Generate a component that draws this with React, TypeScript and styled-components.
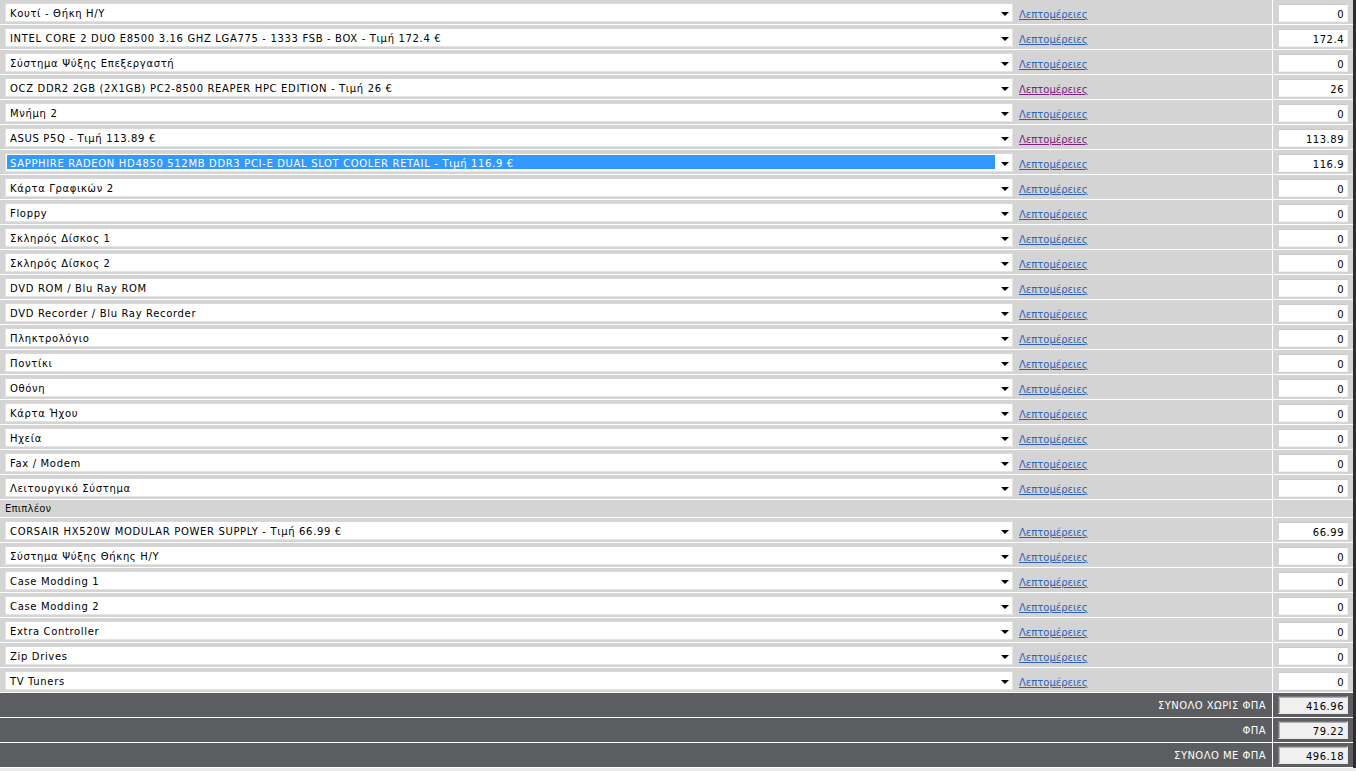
import styled, { createGlobalStyle } from "styled-components"

const GlobalStyle = createGlobalStyle`
  html, body {
    margin: 0;
    padding: 0;
    background: #ebebeb;
  }
  body {
    font-family: "DejaVu Sans", Verdana, sans-serif;
    font-size: 10px;
    color: #000;
  }
`

type Part = {
  label: string
  price: string
  visited?: boolean
  focused?: boolean
}

const mainParts: Part[] = [
  { label: "Κουτί - Θήκη Η/Υ", price: "0" },
  { label: "INTEL CORE 2 DUO E8500 3.16 GHZ LGA775 - 1333 FSB - BOX - Τιμή 172.4 €", price: "172.4" },
  { label: "Σύστημα Ψύξης Επεξεργαστή", price: "0" },
  { label: "OCZ DDR2 2GB (2X1GB) PC2-8500 REAPER HPC EDITION - Τιμή 26 €", price: "26", visited: true },
  { label: "Μνήμη 2", price: "0" },
  { label: "ASUS P5Q - Τιμή 113.89 €", price: "113.89", visited: true },
  { label: "SAPPHIRE RADEON HD4850 512MB DDR3 PCI-E DUAL SLOT COOLER RETAIL - Τιμή 116.9 €", price: "116.9", focused: true },
  { label: "Κάρτα Γραφικών 2", price: "0" },
  { label: "Floppy", price: "0" },
  { label: "Σκληρός Δίσκος 1", price: "0" },
  { label: "Σκληρός Δίσκος 2", price: "0" },
  { label: "DVD ROM / Blu Ray ROM", price: "0" },
  { label: "DVD Recorder / Blu Ray Recorder", price: "0" },
  { label: "Πληκτρολόγιο", price: "0" },
  { label: "Ποντίκι", price: "0" },
  { label: "Οθόνη", price: "0" },
  { label: "Κάρτα Ήχου", price: "0" },
  { label: "Ηχεία", price: "0" },
  { label: "Fax / Modem", price: "0" },
  { label: "Λειτουργικό Σύστημα", price: "0" },
]

const extraParts: Part[] = [
  { label: "CORSAIR HX520W MODULAR POWER SUPPLY - Τιμή 66.99 €", price: "66.99" },
  { label: "Σύστημα Ψύξης Θήκης Η/Υ", price: "0" },
  { label: "Case Modding 1", price: "0" },
  { label: "Case Modding 2", price: "0" },
  { label: "Extra Controller", price: "0" },
  { label: "Zip Drives", price: "0" },
  { label: "TV Tuners", price: "0" },
]

const totals = [
  { label: "ΣΥΝΟΛΟ ΧΩΡΙΣ ΦΠΑ", value: "416.96" },
  { label: "ΦΠΑ", value: "79.22" },
  { label: "ΣΥΝΟΛΟ ΜΕ ΦΠΑ", value: "496.18" },
]

const Table = styled.div`
  width: 1353px;
  border-right: 3px solid #2e2e2e;
  display: flex;
  flex-direction: column;
`

const Row = styled.div<{ $dark?: boolean; $short?: boolean }>`
  display: grid;
  grid-template-columns: 1273px 1fr;
  height: ${(p) => (p.$short ? "17px" : "24px")};
  border-bottom: 1px solid #fff;
  background: ${(p) => (p.$dark ? "#5c5d61" : "#d4d4d4")};
`

const MainCell = styled.div<{ $align?: "left" | "right" }>`
  display: flex;
  align-items: center;
  justify-content: ${(p) => (p.$align === "right" ? "flex-end" : "flex-start")};
  padding: 0 6px 0 5px;
  border-right: 1px solid #fff;
  min-width: 0;
`

const PriceCell = styled.div`
  display: flex;
  align-items: center;
  padding-left: 5px;
`

const Picker = styled.div`
  position: relative;
  width: 1008px;
  height: 19px;
  margin-top: 1px;
  box-sizing: border-box;
  background: #fff;
  border: 1px solid #e4e4e4;
  border-top-color: #d8d8d8;
  display: flex;
  align-items: flex-start;
  padding: 1px 0 0 1px;
`

const PickerText = styled.span<{ $focused?: boolean }>`
  display: block;
  width: 988px;
  height: 14px;
  line-height: 17px;
  padding-left: 3px;
  box-sizing: border-box;
  white-space: nowrap;
  letter-spacing: 0.66px;
  background: ${(p) => (p.$focused ? "#3399ff" : "transparent")};
  color: ${(p) => (p.$focused ? "#fff" : "#000")};
`

const Arrow = styled.svg`
  position: absolute;
  right: 3px;
  top: 8px;
`

const Details = styled.a<{ $visited?: boolean }>`
  margin-left: 6px;
  margin-top: 4px;
  color: ${(p) => (p.$visited ? "#7b2282" : "#2f62b4")};
  text-decoration: underline;
  white-space: nowrap;
  cursor: pointer;
`

const PriceBox = styled.div<{ $total?: boolean }>`
  width: 70px;
  height: 18px;
  margin-top: ${(p) => (p.$total ? "0" : "2px")};
  box-sizing: border-box;
  text-align: right;
  line-height: 19px;
  padding-right: 3px;
  letter-spacing: 0.5px;
  background: ${(p) => (p.$total ? "#f0f0f0" : "#fff")};
  border: 1px solid;
  border-color: ${(p) =>
    p.$total ? "#7a7a7a #e6e6e6 #e6e6e6 #7a7a7a" : "#c9c9c9 #f2f2f2 #f2f2f2 #d6d6d6"};
  ${(p) => (p.$total ? "box-shadow: inset 1px 1px 0 #b0b0b0;" : "")}
`

const GroupLabel = styled.span`
  color: #111;
  letter-spacing: 0.2px;
`

const TotalLabel = styled.span`
  color: #fff;
  letter-spacing: 0.45px;
`

function PartRow({ part }: { part: Part }) {
  return (
    <Row>
      <MainCell>
        <Picker>
          <PickerText $focused={part.focused}>{part.label}</PickerText>
          <Arrow width="8" height="4" viewBox="0 0 8 4">
            <path d="M0 0 H8 L4 4 Z" fill="#000" />
          </Arrow>
        </Picker>
        <Details $visited={part.visited}>Λεπτομέρειες</Details>
      </MainCell>
      <PriceCell>
        <PriceBox>{part.price}</PriceBox>
      </PriceCell>
    </Row>
  )
}

export default function App() {
  return (
    <>
      <GlobalStyle />
      <Table>
        {mainParts.map((part) => (
          <PartRow key={part.label} part={part} />
        ))}
        <Row $short>
          <MainCell>
            <GroupLabel>Επιπλέον</GroupLabel>
          </MainCell>
          <PriceCell />
        </Row>
        {extraParts.map((part) => (
          <PartRow key={part.label} part={part} />
        ))}
        {totals.map((t) => (
          <Row $dark key={t.label}>
            <MainCell $align="right">
              <TotalLabel>{t.label}</TotalLabel>
            </MainCell>
            <PriceCell>
              <PriceBox $total>{t.value}</PriceBox>
            </PriceCell>
          </Row>
        ))}
      </Table>
    </>
  )
}
